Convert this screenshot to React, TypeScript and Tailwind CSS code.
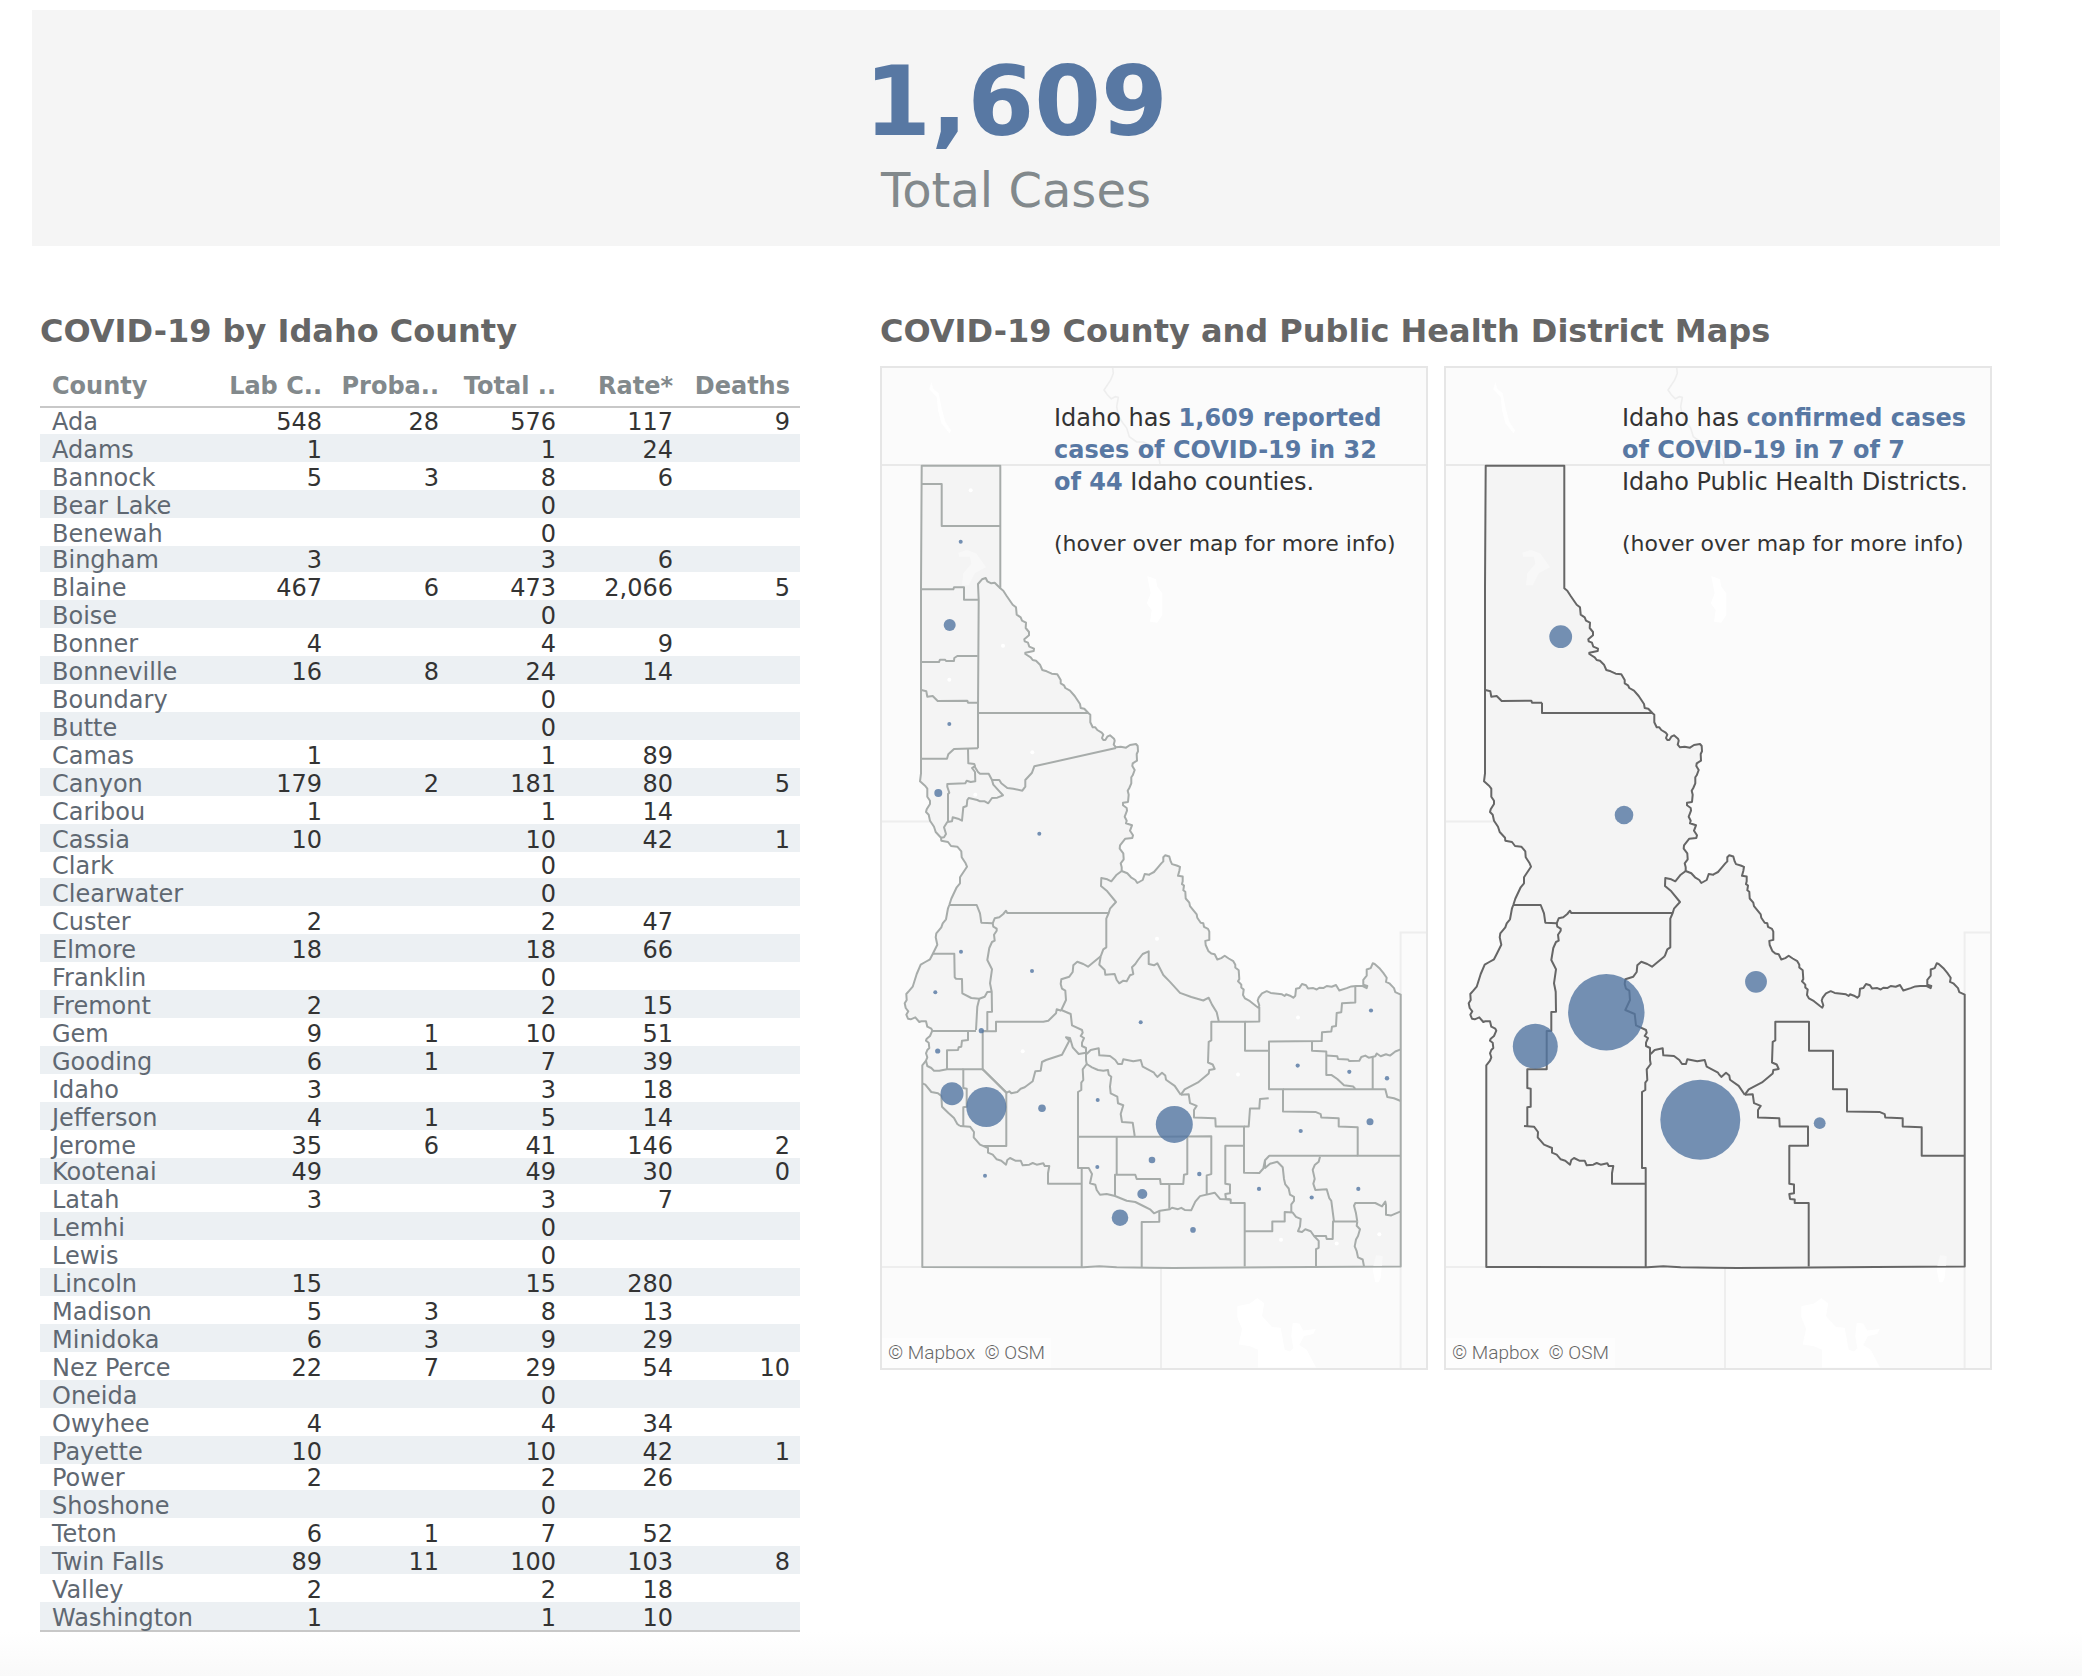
import React from "react";

type Row = [string, string, string, string, string, string];

const ROWS: Row[] = [
  ["Ada", "548", "28", "576", "117", "9"],
  ["Adams", "1", "", "1", "24", ""],
  ["Bannock", "5", "3", "8", "6", ""],
  ["Bear Lake", "", "", "0", "", ""],
  ["Benewah", "", "", "0", "", ""],
  ["Bingham", "3", "", "3", "6", ""],
  ["Blaine", "467", "6", "473", "2,066", "5"],
  ["Boise", "", "", "0", "", ""],
  ["Bonner", "4", "", "4", "9", ""],
  ["Bonneville", "16", "8", "24", "14", ""],
  ["Boundary", "", "", "0", "", ""],
  ["Butte", "", "", "0", "", ""],
  ["Camas", "1", "", "1", "89", ""],
  ["Canyon", "179", "2", "181", "80", "5"],
  ["Caribou", "1", "", "1", "14", ""],
  ["Cassia", "10", "", "10", "42", "1"],
  ["Clark", "", "", "0", "", ""],
  ["Clearwater", "", "", "0", "", ""],
  ["Custer", "2", "", "2", "47", ""],
  ["Elmore", "18", "", "18", "66", ""],
  ["Franklin", "", "", "0", "", ""],
  ["Fremont", "2", "", "2", "15", ""],
  ["Gem", "9", "1", "10", "51", ""],
  ["Gooding", "6", "1", "7", "39", ""],
  ["Idaho", "3", "", "3", "18", ""],
  ["Jefferson", "4", "1", "5", "14", ""],
  ["Jerome", "35", "6", "41", "146", "2"],
  ["Kootenai", "49", "", "49", "30", "0"],
  ["Latah", "3", "", "3", "7", ""],
  ["Lemhi", "", "", "0", "", ""],
  ["Lewis", "", "", "0", "", ""],
  ["Lincoln", "15", "", "15", "280", ""],
  ["Madison", "5", "3", "8", "13", ""],
  ["Minidoka", "6", "3", "9", "29", ""],
  ["Nez Perce", "22", "7", "29", "54", "10"],
  ["Oneida", "", "", "0", "", ""],
  ["Owyhee", "4", "", "4", "34", ""],
  ["Payette", "10", "", "10", "42", "1"],
  ["Power", "2", "", "2", "26", ""],
  ["Shoshone", "", "", "0", "", ""],
  ["Teton", "6", "1", "7", "52", ""],
  ["Twin Falls", "89", "11", "100", "103", "8"],
  ["Valley", "2", "", "2", "18", ""],
  ["Washington", "1", "", "1", "10", ""],
];

const HEADERS = ["Lab C..", "Proba..", "Total ..", "Rate*", "Deaths"];

const sheet =
  (ox: number, oy: number, sy: number) =>
  (points: string): string =>
    points
      .trim()
      .split(/\s+/)
      .map((p) => {
        const [x, y] = p.split(",").map(Number);
        return `${(ox + x / 3).toFixed(1)},${(oy + y * sy).toFixed(1)}`;
      })
      .join(" ");

const north = sheet(870, 440, 1 / 3);
const west = sheet(870, 840, 1 / 3);
const south = sheet(870, 1040, 1 / 3);
const east = sheet(1150, 840, 540 / 1568);
const border = sheet(870, 360, 1 / 3);

const OUTLINE = [
  north(
    "155,77 391,77 391,445 400,452 410,468 428,494 438,502 440,524 452,532 456,542 468,548 467,564 477,576 477,586 463,598 464,604 474,608 478,620 492,626 491,633 466,638 466,642 482,652 488,660 498,662 510,674 517,690 530,694 545,701 562,703 572,720 572,730 582,736 586,744 600,752 614,768 630,792 632,804 643,806 655,819 661,824 661,847 668,862 676,862 682,870 695,878 700,884 696,894 700,900 706,900 712,890 720,886 732,896 734,902 731,914 738,922 752,920 768,923 780,915 798,912 803,918 804,934 800,942 801,962 788,970 787,978 794,990 788,1006 784,1012 784,1030 778,1044 773,1052 776,1064 774,1086 759,1088 759,1096 770,1104 771,1112 764,1130 770,1142 768,1150 786,1156 780,1172 789,1186 787,1194 766,1196 750,1216 749,1226 760,1240 761,1258 752,1270 755,1282 755,1293 772,1300 783,1312 796,1320 802,1329 818,1320 824,1302 838,1304"
  ),
  east(
    "0,99 12,93 22,82 34,68 40,62 40,50 46,44 58,48 62,62 66,70 80,74 90,78 88,90 84,104 98,106 98,120 96,128 102,132 100,146 106,150 107,170 118,182 120,192 140,216 142,226 152,240 160,242 162,252 174,258 178,266 178,290 166,293 167,305 175,322 184,330 194,332 202,347 214,343 224,336 236,344 250,352 256,362 256,370 266,378 268,404 264,410 274,420 274,428 281,434 279,450 285,460 300,468 318,482 325,487 328,480 323,466 326,458 336,445 350,439 362,444 396,448 404,453 408,448 420,452 430,458 436,452 438,432 448,430 456,418 468,422 474,431 490,430 500,434 508,429 520,430 530,424 545,426 558,421 568,437 590,430 604,425 618,424 638,424 650,430 652,424 640,420 640,406 650,394 650,376 662,372 668,358 674,360 690,374 700,386 710,400 708,412 718,416 732,430 736,442 752,449 752,1238 484,1240 70,1243 0,1242"
  ),
  south("740,682 688,679 640,682 157,681"),
  west(
    "157,676 168,662 172,652 168,640 172,630 178,624 176,608 168,602 170,596 180,588 187,572 184,566 172,560 168,544 154,544 148,546 136,532 122,538 114,536 109,524 115,514 107,504 104,490 110,480 109,462 118,452 128,440 140,402 152,374 166,366 180,358 188,342 202,314 197,292 199,280 214,262 218,250 228,238 234,205 238,195 244,176 260,142 270,130 270,112 291,80 286,68 275,52 274,34 262,20 243,18 234,6 214,2"
  ),
  north(
    "213,1193 197,1176 192,1160 180,1142 176,1124 168,1116 170,1108 180,1092 180,1082 172,1070 172,1046 166,1038 150,1024 153,1000 153,440"
  ),
].join(" ");

const DISTRICT_BORDERS = [
  north("154,750 169,754 172,770 188,768 203,783 292,782 294,788 324,788"),
  north("324,788 324,819 655,819"),
  west("238,195 320,195 330,220 334,248 368,250 374,235 388,232 400,222 408,212 412,219 716,219"),
  west("755,93 740,104 724,124 712,118 694,114 693,138 712,154 738,186 720,206 716,219 709,236 709,322 700,328 692,349"),
  west(
    "692,349 654,380 640,372 622,365 610,376 608,396 598,410 574,418 572,432 576,446 586,452 588,480 574,510 602,522 606,556 636,570 638,578 632,588 642,594 636,608 636,618 648,624 648,642"
  ),
  west("368,250 370,260 380,266 380,272 372,284 374,302 366,306 358,324 352,360 366,388 360,430 365,455 366,515 352,516 352,573 338,573 338,688 280,688 280,744 290,746 290,800 280,802 280,858"),
  south(
    "270,258 300,260 312,276 311,292 330,314 354,324 354,338 368,344 380,358 394,362 408,374 412,360 420,354 436,362 452,362 458,376 478,374 488,369 500,374 520,370 524,378 538,378 534,400 534,431 635,431"
  ),
  south("648,42 648,60 650,72 638,88 640,120 634,128 634,150 624,156 624,384 635,384 635,681"),
  south("650,42 662,30 686,25 688,46 720,48 736,60 744,72 756,72 760,58 790,64 812,60 818,80 852,98 856,104") +
    " " +
    east("22,688 36,676 46,684 48,696 74,714 92,740"),
  east("92,740 104,724 144,704 176,678 178,668 194,665 188,652 174,646 176,586 184,582 184,528 285,528 285,612 357,612 357,724 399,724 399,788 498,790 512,796 514,806 566,808 566,832 623,834 623,917 752,917"),
  east("92,740 116,738 120,764 140,772 132,784 132,806 196,808 197,832 282,832 282,888 226,888 226,998 240,1000 240,1026 226,1028 228,1042 242,1044 242,1054 284,1054 284,1238"),
];

const COUNTY_BORDERS = [
  north("155,132 215,132 215,258 391,258"),
  north("154,448 250,448 252,442 282,442 282,479 324,479"),
  north("324,925 324,800 326,479 324,432 336,418 347,414 352,424 364,430 374,428 391,445"),
  north("154,666 207,666 210,659 225,659 228,663 252,663 253,654 262,648 323,648"),
  north("154,956 231,956 235,943 252,927 324,925"),
  north("294,927 295,970 313,972 315,978 306,984 315,996 316,1024 302,1026 290,1022 286,1030 232,1032 232,1040 238,1058 234,1062 234,1146"),
  north("313,978 324,996 330,1001 356,1001 366,1020 388,1020 394,1030 412,1044 430,1046 457,1052 466,1040 466,1020 486,998 493,979 738,924"),
  north("366,1020 370,1034 386,1052 399,1066 382,1073 366,1074 355,1090 344,1084 330,1084 322,1080 296,1074 292,1080 290,1098 280,1102 276,1142 264,1136 248,1132 246,1144 232,1146 222,1162 228,1182 222,1192 213,1193"),
  west("692,349 688,374 704,390 706,404 734,402 740,420 748,430 760,422 770,424 780,406 790,402 786,382 796,372 804,360 818,342 836,334 836,372 852,376") +
    " " +
    east("22,358 40,392 60,412 90,444 124,456 160,466 176,458 186,478 200,500 206,526"),
  west("188,341 253,341 254,412 258,416 276,417 277,460 304,474 328,476 344,470 352,456 365,455"),
  west("328,476 322,500 318,570"),
  west("187,573 318,573"),
  west("338,574 378,574 378,545 520,545 535,542 558,520 560,508 574,512"),
  west("294,573 294,600 276,602 274,620 266,622 264,630 231,631 231,688"),
  west("168,662 172,678 184,684 192,692 208,692 231,688 280,688"),
  west("338,688 410,758 418,754 424,760 442,756 452,746 464,742 488,724 496,694 512,692 516,666 528,660 576,644 598,602 588,592 600,594 608,622 626,642 648,638"),
  south("338,88 409,158 409,318 340,318"),
  south("157,130 166,134 184,156 204,160 214,168 216,200 236,220 252,234 262,252 270,258"),
  south("624,384 656,384 666,402 660,430 676,434 680,450 690,464 710,462 735,468 770,482 796,486 820,498 840,508 852,520 870,512") +
    " " +
    east("60,1072 66,1068 84,1072 94,1068 104,1074 124,1075 136,1050 150,1034 194,1024 210,1042 240,1044"),
  south("650,72 666,82 684,90 700,92 714,90 716,104 724,110 720,140 722,160 742,170 744,190 760,196 752,222 756,246 788,248 794,288"),
  south("624,290 865,290") + " " + east("184,860 184,970 170,974 170,1028"),
  south("740,290 740,404"),
  south("735,468 735,404 796,404 800,417 870,417 872,432 898,432 898,506"),
  south("868,512 868,545 815,546 815,682"),
  east("60,999 100,999 102,972 112,970 112,860"),
  east("282,832 296,832 298,808 300,780 328,780 330,752 356,750"),
  east("357,612 357,585 515,584 516,558 544,556 546,542 558,540 560,502 574,500 576,474 616,472 616,424"),
  east("285,528 328,527 328,484"),
  east("282,888 282,966 328,967 340,954 345,930 358,917 623,917"),
  east("486,584 486,612 529,614 529,682 544,682 562,694 582,712 610,716 616,723"),
  east("529,626 562,628 564,636 594,637 598,642 628,641 634,630 646,626 656,632 676,628 680,620 692,628 708,622 720,626 736,614 752,608"),
  east("668,628 668,723"),
  east("399,724 706,724 712,746 732,750 752,758"),
  east("345,930 345,952 360,940 382,934 398,950 402,984 406,1000 416,1012 420,1030 432,1036 432,1048 424,1058 424,1080"),
  east("284,1136 367,1136 367,1108 404,1108 404,1080 428,1082 438,1094 452,1100 450,1122 444,1136 456,1138 466,1130 482,1136 492,1150 506,1164 506,1184 498,1188 498,1238"),
  east("510,920 506,934 494,944 488,958 494,984 490,998 496,1016 530,1014 538,1040 544,1048 552,1108"),
  east("492,1150 528,1150 530,1159 548,1159 549,1108 622,1108"),
  east("622,1108 618,1084 612,1062 616,1054 676,1054 696,1064 706,1050 708,1060 708,1088 724,1090 752,1078"),
  east("622,1108 620,1120 630,1130 624,1150 618,1160 614,1180 620,1194 624,1212 638,1218 642,1238"),
];

type Dot = [number, number, number];

const COUNTY_DOTS: Dot[] = [
  [960.7, 541.7, 2], [949.7, 625, 6], [949.3, 724, 2], [938.3, 793, 4], [1039.3, 833.7, 2],
  [961, 951.7, 2], [935.3, 992.3, 2], [1032, 971, 2], [1140.7, 1022.3, 2], [981.3, 1030.7, 2.6],
  [937.7, 1051, 2.6], [952, 1093.7, 11.5], [986.3, 1107, 20], [1042, 1108.3, 3.8], [1097.7, 1100, 2],
  [985, 1175.7, 2], [1097.3, 1167, 2], [1152, 1160, 3.3], [1142.3, 1194, 5], [1120, 1217.7, 8.3],
  [1174.3, 1124.4, 18.5], [1199.3, 1174, 2.2], [1193, 1229.9, 2.8], [1259, 1188.9, 2.1],
  [1311.7, 1197.5, 2.1], [1358.3, 1188.9, 2.1], [1300.7, 1131, 2.1], [1370, 1121.7, 3.5],
  [1297.7, 1065.6, 2.1], [1349.3, 1071.8, 2.1], [1387, 1078.3, 2.2], [1371, 1010.5, 2.1],
];

const EMPTY_DOTS: Dot[] = [
  [970.7, 490.3, 2], [1003, 645.7, 2], [949.3, 679.7, 2], [1032.3, 752.3, 2], [975.3, 794.7, 2],
  [1157, 938.7, 2], [1022.7, 1051.3, 2], [1238, 1074.5, 2], [1298, 1017.4, 2], [1281, 1239.8, 2],
  [1336.7, 1243.6, 2], [1379.3, 1234.3, 2],
];

const DISTRICT_DOTS: Dot[] = [
  [996.7, 636.7, 11.4], [1060, 815, 9.3], [1042.3, 1012.3, 38.2], [971.3, 1046.3, 22.5],
  [1136.3, 1119.7, 40], [1192, 981.8, 10.9], [1255.7, 1123.2, 5.9],
];

function IdahoMap({ label, counties }: { label: string; counties: boolean }) {
  const dots = counties ? COUNTY_DOTS : DISTRICT_DOTS;
  const lines = counties ? [...DISTRICT_BORDERS, ...COUNTY_BORDERS] : DISTRICT_BORDERS;
  return (
    <svg viewBox="882 368 544 1000" className="block h-auto w-full" role="img" aria-label={label}>
      <rect x="882" y="368" width="544" height="1000" fill="#fbfbfb" />
      <g fill="none" stroke="#eeeeee" strokeWidth="2">
        <path d="M882 465H1426" stroke="#e9e9e9" />
        <path d="M882 821.5H932M882 1267H922M1161 1267V1368M1426 932.5H1400.6V1368" />
        <polyline
          strokeWidth="1.6"
          points={border("728,24 730,40 722,60 714,72 702,90 712,104 724,116 736,110 745,112 740,140 746,170 758,188 770,204 778,230 800,246 820,246 850,260 866,290 870,312")}
        />
      </g>
      <g fill="#ffffff">
        <polygon points={border("184,66 190,86 206,100 214,140 226,185 244,212 238,220 214,190 204,150 200,112 178,88")} />
        <polygon points={north("832,408 858,418 862,440 877,460 877,525 862,548 840,545 845,510 830,490 842,460")} />
        <polygon
          points={east(
            "262,1354 300,1346 322,1330 343,1345 336,1382 366,1414 392,1416 404,1480 420,1485 430,1475 424,1440 428,1402 448,1404 460,1424 497,1420 490,1434 462,1440 448,1466 470,1480 498,1532 324,1532 324,1480 300,1470 266,1465 276,1420 262,1386"
          )}
        />
        <polygon points={east("678,1206 698,1208 692,1270 686,1284 676,1284 668,1246")} />
      </g>
      <g strokeWidth="2" strokeLinejoin="round" fill="none" stroke={counties ? "#a7acaa" : "#666666"}>
        <polygon points={OUTLINE} fill="#f4f4f4" />
        <polygon
          stroke="none"
          fill="#f8f8f8"
          points={north("265,338 290,330 318,340 348,382 314,400 296,436 276,436 280,400 304,372 300,350 268,350")}
        />
        <polygon stroke="none" fill="#f8f8f8" points={east("678,1206 698,1208 696,1236 670,1236")} />
        {lines.map((points) => (
          <polyline key={points} points={points} />
        ))}
      </g>
      {counties &&
        EMPTY_DOTS.map(([x, y, r]) => <circle key={`${x}-${y}`} cx={x} cy={y} r={r} fill="#ffffff" />)}
      <g fill="#5276a1" fillOpacity="0.8">
        {dots.map(([x, y, r]) => (
          <circle key={`${x}-${y}`} cx={x} cy={y} r={r} />
        ))}
      </g>
    </svg>
  );
}

function Credits() {
  return (
    <figcaption className="absolute bottom-0 left-0 bg-white/50 px-1.5 font-['Roboto',sans-serif] text-[19px] leading-[30px] font-light whitespace-pre text-[#666]">
      {"© Mapbox  © OSM"}
    </figcaption>
  );
}

export default function App() {
  return (
    <div className="bg-white pt-2.5 font-['DejaVu_Sans',Verdana,sans-serif]">
      <main className="pr-[82px] pl-8">
        <header className="flex h-[236px] flex-col items-center bg-[#f5f5f5] pt-11">
          <p className="text-[96px] leading-[96px] font-bold text-[#5878a3]">1,609</p>
          <p className="mt-3 text-5xl leading-[56px] text-[#82898c]">Total Cases</p>
        </header>

        <div className="mt-16 grid grid-cols-[760fr_1112fr] items-start gap-20 px-2">
          <section>
            <h2 className="text-[32px] leading-[42px] font-bold whitespace-nowrap text-[#666]">COVID-19 by Idaho County</h2>
            <table className="w-full table-fixed border-separate border-spacing-0 border-b-2 border-[#c8c8c8] text-2xl leading-6">
              <colgroup>
                <col />
                <col className="w-[117px]" />
                <col className="w-[117px]" />
                <col className="w-[117px]" />
                <col className="w-[117px]" />
                <col className="w-[117px]" />
              </colgroup>
              <thead>
                <tr className="h-14 text-[#82898c]">
                  <th scope="col" className="border-b-2 border-[#c8c8c8] pb-2 pl-3 text-left align-bottom">
                    County
                  </th>
                  {HEADERS.map((h) => (
                    <th key={h} scope="col" className="border-b-2 border-[#c8c8c8] pr-2.5 pb-2 text-right align-bottom whitespace-nowrap">
                      {h}
                    </th>
                  ))}
                </tr>
              </thead>
              <tbody>
                {ROWS.map(([county, ...values], i) => (
                  <tr
                    key={county}
                    className={`${i === 0 || i % 11 === 5 ? "h-[26px]" : "h-7"} ${i % 2 ? "bg-[#ecf0f3]" : ""}`}
                  >
                    <th scope="row" className="p-0 pl-3 text-left align-bottom font-normal whitespace-nowrap text-[#5f6872]">
                      {county}
                    </th>
                    {values.map((v, c) => (
                      <td key={c} className="p-0 pr-2.5 text-right align-bottom text-[#333]">
                        {v}
                      </td>
                    ))}
                  </tr>
                ))}
              </tbody>
            </table>
          </section>

          <section>
            <h2 className="text-[32px] leading-[42px] font-bold whitespace-nowrap text-[#666]">
              COVID-19 County and Public Health District Maps
            </h2>
            <div className="mt-3.5 grid grid-cols-2 gap-4">
              <figure className="relative border-2 border-[#e6e6e6]">
                <IdahoMap counties label="Cases by Idaho county" />
                <div className="absolute top-[34px] left-[172px] text-2xl leading-8 whitespace-nowrap text-[#333]">
                  <p>
                    Idaho has <b className="text-[#5878a3]">1,609 reported</b>
                    <br />
                    <b className="text-[#5878a3]">cases of COVID-19 in 32</b>
                    <br />
                    <b className="text-[#5878a3]">of 44</b> Idaho counties.
                  </p>
                  <p className="mt-[30px] text-[22px]">(hover over map for more info)</p>
                </div>
                <Credits />
              </figure>
              <figure className="relative border-2 border-[#e6e6e6]">
                <IdahoMap counties={false} label="Cases by Idaho public health district" />
                <div className="absolute top-[34px] left-[176px] text-2xl leading-8 whitespace-nowrap text-[#333]">
                  <p>
                    Idaho has <b className="text-[#5878a3]">confirmed cases</b>
                    <br />
                    <b className="text-[#5878a3]">of COVID-19 in 7 of 7</b>
                    <br />
                    Idaho Public Health Districts.
                  </p>
                  <p className="mt-[30px] text-[22px]">(hover over map for more info)</p>
                </div>
                <Credits />
              </figure>
            </div>
          </section>
        </div>
      </main>
      <div className="h-11 bg-linear-to-b from-white to-[#f9f9f9]" />
    </div>
  );
}
